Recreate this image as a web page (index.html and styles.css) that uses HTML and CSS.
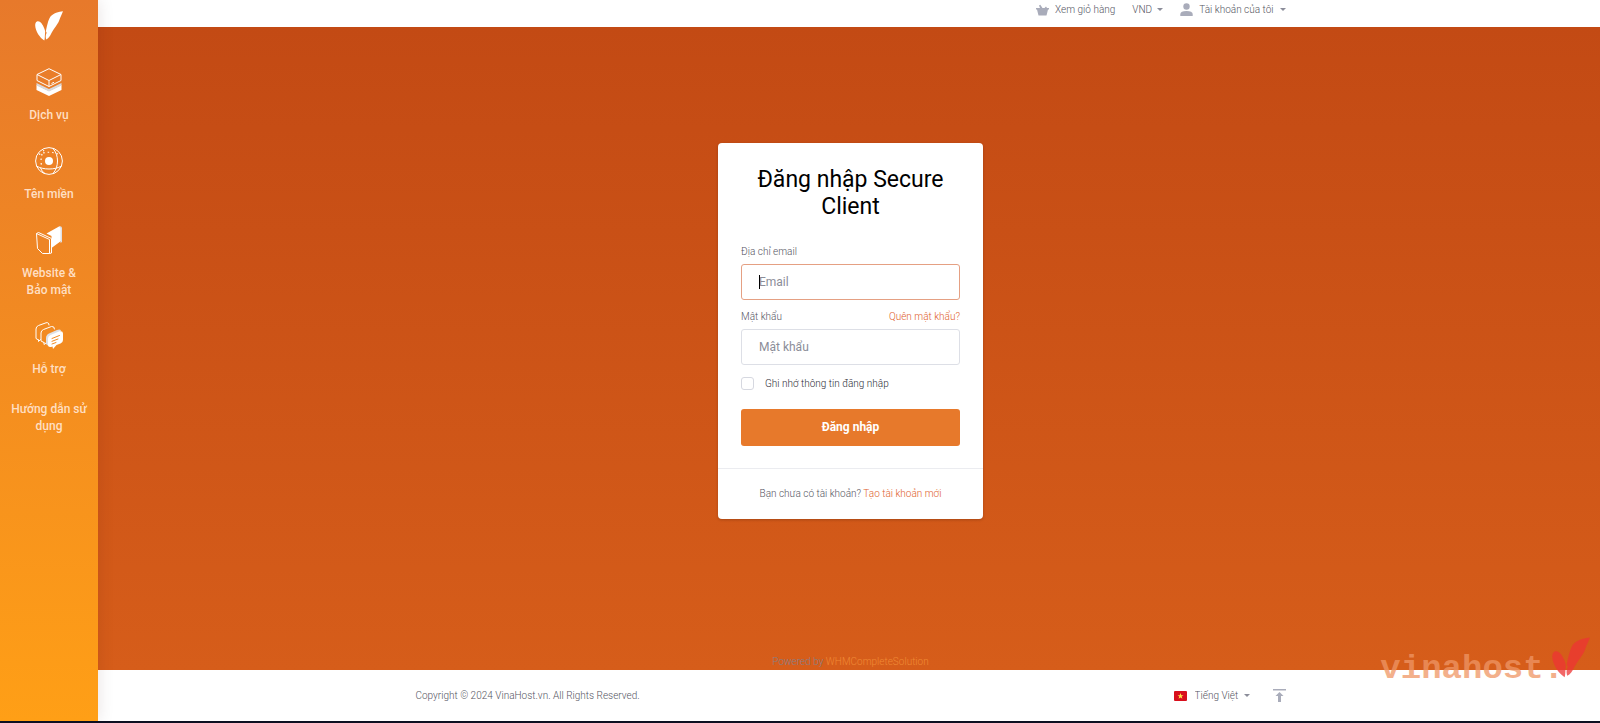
FILE: index.html
```html
<!DOCTYPE html>
<html lang="vi">
<head>
    <meta charset="UTF-8">
    <meta name="viewport" content="width=device-width, initial-scale=1.0">
    <title>Đăng nhập - VinaHost</title>
    <link rel="stylesheet" href="styles.css">
</head>
<body>

    <nav class="sidebar">
        <a class="logo" href="#" aria-label="VinaHost">
            <svg width="28" height="30" viewBox="0 0 28 30" fill="#fff">
                <path d="M2 10.500C5 9.500 7.500 13 9.300 17.500C10.200 20 10.300 20.500 10 23C9.700 25.500 10 27.500 9.300 29.500C5 27 .3 20 .2 14.500C.2 12.500 .7 11 2 10.500Z"/>
                <path d="M28 .3C24 .5 18 2.500 15.500 5.500C13 9 11.800 16 10.800 20.500C12 21 11.500 22.500 11 23.500C10.500 25 10.800 27 11.200 28.500C13.500 27.500 15 25 16.500 22C18 19 20.500 16 22 13.500C24.500 10.500 24.500 7.500 26 5Z"/>
            </svg>
        </a>

        <a class="menu-item" href="#">
            <svg width="28" height="28" viewBox="0 0 28 28">
                <path d="M1.500 17L14 23L26.500 17V22L14 28L1.500 22Z" fill="#fff"/>
                <path d="M1.500 15L14 21L26.500 15V17.500L14 23.500L1.500 17.500Z" fill="#d9dadd"/>
                <path d="M14 .7L26 6.500V12.500L14 18.500L2 12.500V6.500ZM2 6.500L14 12.500L26 6.500M14 12.500V18.500M16.500 15.500L19 14.300" fill="#e97d2a" stroke="#fff" stroke-linejoin="round"/>
            </svg>
            <span>Dịch vụ</span>
        </a>
        <a class="menu-item" href="#">
            <svg width="28" height="28" viewBox="0 0 28 28" fill="none" stroke="#fff">
                <circle cx="14" cy="14" r="13.400"/>
                <path d="M1.500 19C8 23 20 23 26.500 19M18 1.500C24 8 24 20 18 26.500M5.500 21Q7 25 10 26.500"/>
                <path d="M4 7.500C9 4.500 18 4.500 24 7.500M9 3C5.500 8 5.500 16 7 20" stroke-width="1.200" stroke-dasharray="1.500 3"/>
                <circle cx="14" cy="14" r="4" fill="#fff" stroke="none"/>
            </svg>
            <span>Tên miền</span>
        </a>
        <a class="menu-item" href="#">
            <svg width="28" height="28" viewBox="0 0 28 28">
                <path d="M11.500 7.500L24 .5Q26 0 26 2V15L16.500 22V10Z" fill="#fff"/>
                <path d="M24 .4Q27 0 27 2V16L25.500 17V2.500Z" fill="#dfe0e4"/>
                <path d="M1.500 7.500L3.500 6.500L16.500 12.500V27L14.500 27.500H7.500L2.500 22.500ZM1.500 7.500L14.500 13.500V27.500" fill="#ee8526" stroke="#fff" stroke-linejoin="round"/>
            </svg>
            <span>Website &amp;<br>Bảo mật</span>
        </a>
        <a class="menu-item" href="#">
            <svg width="28" height="28" viewBox="0 0 28 28" fill="none" stroke="#fff" stroke-linejoin="round" stroke-linecap="round">
                <path d="M3.500 18L1 16.500V7Q1 4.500 3.500 3.500L11 .8Q14 0 14 3M3.500 18V19.500L5.500 17.500"/>
                <path d="M9 20.500L6 19V11Q6 8.500 8.500 7.500L16.500 4.500Q19.500 4 19.500 7M9 20.500V22.500L11 21"/>
                <path d="M11 16Q11 13 14 11.500L22 8Q25 7 26 8.500L16 23L13.500 24L11 22Z" fill="#dfe0e4" stroke="none"/>
                <path d="M13 16.500Q13 14 15.500 13L24.500 9.300Q28 8.500 28 11.500V18Q28 20.500 25.500 21.500L21.500 23L18 27L17.500 24.500Q13 26 13 23Z" fill="#fff" stroke="none"/>
                <path d="M17 16.500L24.500 13.500M17 19.300L23 17M17 22L21 20.500" stroke="#f28b22"/>
            </svg>
            <span>Hỗ trợ</span>
        </a>
        <a class="menu-item" href="#">
            <span>Hướng dẫn sử dụng</span>
        </a>
    </nav>

    <div class="page">
        <header class="topbar">
            <div class="container topbar-items">
                <a class="top-link" href="#">
                    <svg width="13" height="12" viewBox="0 0 13 12" fill="#a9acba">
                        <path d="M0 4H4L3 1.500L4.300 .8L6.500 4H8.500L10 2.500L11 4H13V5.500H12L10.500 11.500H2.500L1 5.500H0Z"/>
                    </svg>
                    Xem giỏ hàng
                </a>
                <label class="dropdown">
                    <select aria-label="Tiền tệ">
                        <option>VND</option>
                    </select>
                    <i class="caret"></i>
                </label>
                <button class="top-link account" type="button">
                    <svg width="13" height="13" viewBox="0 0 13 13" fill="#a9acba">
                        <circle cx="6.500" cy="3.500" r="3.200"/>
                        <path d="M.3 13V11Q.5 8 6.500 8Q12.500 8 12.700 11V13Z"/>
                    </svg>
                    Tài khoản của tôi
                    <i class="caret"></i>
                </button>
            </div>
        </header>

        <main class="main">
            <div class="login-area">
                <form class="login-card">
                    <div class="login-body">
                        <h1>Đăng nhập Secure Client</h1>

                        <div class="label-row">
                            <label for="email">Địa chỉ email</label>
                        </div>
                        <div class="email-field">
                            <input class="text-input" type="email" id="email" placeholder="Email" autofocus>
                        </div>

                        <div class="label-row">
                            <label for="password">Mật khẩu</label>
                            <a href="#">Quên mật khẩu?</a>
                        </div>
                        <input class="text-input" type="password" id="password" placeholder="Mật khẩu">

                        <div class="remember">
                            <input type="checkbox" id="remember">
                            <label for="remember">Ghi nhớ thông tin đăng nhập</label>
                        </div>

                        <button class="login-button" type="submit">Đăng nhập</button>
                    </div>
                    <div class="login-footer">
                        Bạn chưa có tài khoản? <a href="#">Tạo tài khoản mới</a>
                    </div>
                </form>
            </div>
            <p class="powered">Powered by <a href="#">WHMCompleteSolution</a></p>
        </main>

        <footer class="footer">
            <div class="container footer-items">
                <span>Copyright © 2024 VinaHost.vn. All Rights Reserved.</span>
                <div class="footer-right">
                    <label class="dropdown language">
                        <svg width="13" height="10" viewBox="0 0 13 10">
                            <rect width="13" height="10" rx="1" fill="#d80f1c"/>
                            <path d="M6.500 2L7.300 4.200H9.500L7.700 5.500L8.400 7.700L6.500 6.400L4.600 7.700L5.300 5.500L3.500 4.200H5.700Z" fill="#ffe14a"/>
                        </svg>
                        <select aria-label="Ngôn ngữ">
                            <option>Tiếng Việt</option>
                        </select>
                        <i class="caret"></i>
                    </label>
                    <a class="to-top" href="#" aria-label="Lên đầu trang">
                        <svg width="13" height="13" viewBox="0 0 13 13" fill="#a9acba">
                            <path d="M0 0H13V1.500H0ZM6.500 3L10.500 7H8V13H5V7H2.500Z"/>
                        </svg>
                    </a>
                </div>
            </div>
        </footer>
    </div>

    <!-- Brand mark over the bottom right corner -->
    <div class="watermark">
        <span>vinahost.</span>
        <svg width="38" height="41" viewBox="0 0 28 30">
            <path d="M2 10.500C5 9.500 7.500 13 9.300 17.500C10.200 20 10.300 20.500 10 23C9.700 25.500 10 27.500 9.300 29.500C5 27 .3 20 .2 14.500C.2 12.500 .7 11 2 10.500Z"/>
            <path d="M28 .3C24 .5 18 2.500 15.500 5.500C13 9 11.800 16 10.800 20.500C12 21 11.500 22.500 11 23.500C10.500 25 10.800 27 11.200 28.500C13.500 27.500 15 25 16.500 22C18 19 20.500 16 22 13.500C24.500 10.500 24.500 7.500 26 5Z"/>
        </svg>
    </div>

</body>
</html>
```
FILE: styles.css
```css
* {
    box-sizing: border-box;
}
body {
    margin: 0;
    display: flex;
    min-height: 100vh;
    border-bottom: 2px solid #0d1022;
    font-family: Roboto, "Noto Sans", sans-serif;
    font-size: 10px;
    font-weight: 300;
    line-height: 15px;
    color: #55555f;
    background-color: #fff;
}
a {
    color: #e0602c;
    text-decoration: none;
}
button, select, input {
    font: inherit;
    color: inherit;
}
svg {
    display: block;
    flex: none;
}

/* Sidebar */
.sidebar {
    width: 98px;
    flex: none;
    display: flex;
    flex-direction: column;
    align-items: center;
    gap: 23px;
    padding: 11px 8px;
    background: linear-gradient(#e7792b, #ff9f16);
    box-shadow: 0 0 16px rgba(60, 10, 0, 0.12);
    z-index: 1;
}
.logo {
    margin-bottom: 4px;
}
.menu-item {
    display: flex;
    flex-direction: column;
    align-items: center;
    gap: 11px;
    color: #ffdfc2;
    font-size: 12px;
    font-weight: 500;
    line-height: 17px;
    text-align: center;
}

/* Page */
.page {
    flex: 1;
    display: flex;
    flex-direction: column;
}
.container {
    width: 100%;
    max-width: 870px;
    margin: 0 auto;
    display: flex;
    align-items: center;
}
.topbar {
    padding: 2px 0 10px 3px;
}
.topbar-items {
    justify-content: flex-end;
    gap: 17px;
}
.top-link {
    display: flex;
    align-items: center;
    gap: 6px;
    padding: 0;
    border: none;
    background: none;
    color: inherit;
}
.dropdown {
    display: flex;
    align-items: center;
    gap: 5px;
}
.dropdown select {
    appearance: none;
    padding: 0;
    border: none;
    background: none;
}
.caret {
    border: 3px solid transparent;
    border-top-color: #8b8d9a;
    border-bottom: none;
}

.main {
    flex: 1;
    display: flex;
    flex-direction: column;
    padding-left: 3px;
    background: linear-gradient(#c34a14, #d65d1a);
}
.login-area {
    flex: 1;
    display: flex;
    align-items: center;
    justify-content: center;
}
.login-card {
    width: 265px;
    border-radius: 4px;
    background-color: #fff;
    box-shadow: 0 1px 3px rgba(0, 0, 0, 0.2);
}
.login-body {
    padding: 23px 23px 22px;
}
.login-body h1 {
    margin: 0 0 24px;
    color: #000;
    font-size: 23px;
    font-weight: 400;
    line-height: 27px;
    text-align: center;
}
.label-row {
    display: flex;
    justify-content: space-between;
    margin-bottom: 5px;
}
.text-input {
    display: block;
    width: 100%;
    height: 36px;
    margin-bottom: 9px;
    padding: 0 17px;
    border: 1px solid #dddfe6;
    border-radius: 3px;
    outline: none;
    background-color: #fff;
    color: #000;
    font-size: 12px;
    font-weight: 400;
}
.text-input:focus {
    border-color: #e5a083;
}
.text-input::placeholder {
    color: #8b8d98;
}
/* Text cursor of the focused field */
.email-field {
    position: relative;
}
.email-field input {
    caret-color: transparent;
}
.email-field:focus-within::after {
    content: "";
    position: absolute;
    top: 11px;
    left: 18px;
    width: 1px;
    height: 14px;
    background-color: #000;
}
.remember {
    display: flex;
    align-items: center;
    gap: 11px;
    margin: 11px 0 18px;
    color: #2c2c36;
}
.remember input {
    appearance: none;
    width: 13px;
    height: 13px;
    margin: 0;
    border: 1px solid #d6d8e0;
    border-radius: 3px;
}
.login-button {
    width: 100%;
    height: 37px;
    border: none;
    border-radius: 3px;
    background-color: #e7792b;
    color: #fff;
    font-size: 12px;
    font-weight: 700;
}
.login-footer {
    padding: 17px 23px 18px;
    border-top: 1px solid #ebecf0;
    text-align: center;
}
.powered {
    margin: 19px 0 1px;
    text-align: center;
    color: #85808c;
}
.powered a {
    color: #f08a35;
}

/* Footer */
.footer {
    padding: 18px 0 18px 3px;
}
.footer-items {
    justify-content: space-between;
}
.footer-right {
    display: flex;
    align-items: center;
    gap: 23px;
}
.language svg {
    margin-right: 3px;
}

.watermark {
    position: absolute;
    right: 10px;
    bottom: 45px;
    display: flex;
    align-items: flex-end;
    opacity: 0.75;
}
.watermark span {
    margin-right: -12px;
    color: #ef9665;
    font-family: "Liberation Mono", monospace;
    font-size: 34px;
    font-weight: 700;
    line-height: 18px;
}
.watermark svg {
    fill: #ee3434;
}
```
